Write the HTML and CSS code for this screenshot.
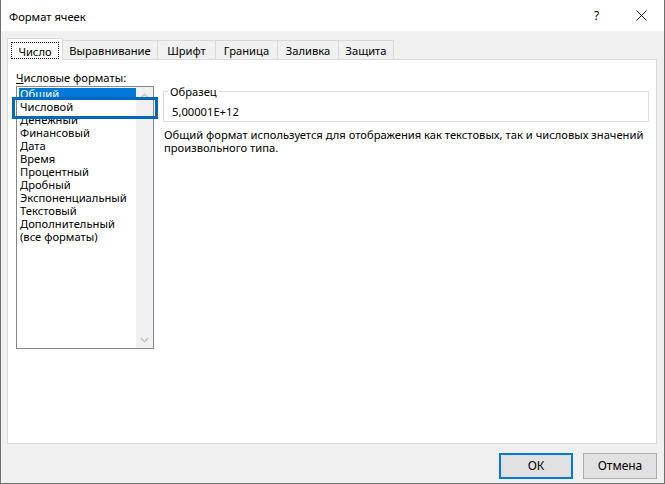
FILE: index.html
```html
<!DOCTYPE html>
<html lang="ru">
<head>
<meta charset="utf-8">
<title>Формат ячеек</title>
<link rel="stylesheet" href="styles.css">
</head>
<body>
<div class="window">
  <div class="titlebar">
    <span class="title">Формат ячеек</span>
    <div class="caption-buttons">
      <div class="cap-btn help">?</div>
      <div class="cap-btn close">
        <svg width="11" height="11" viewBox="0 0 11 11"><path d="M0.5 0.5 L10.5 10.5 M10.5 0.5 L0.5 10.5" stroke="#1a1a1a" stroke-width="1" fill="none"/></svg>
      </div>
    </div>
  </div>
  <div class="client">
    <div class="tabs">
      <div class="tab active"><span class="tab-focus">Число</span></div>
      <div class="tab">Выравнивание</div>
      <div class="tab">Шрифт</div>
      <div class="tab">Граница</div>
      <div class="tab">Заливка</div>
      <div class="tab">Защита</div>
    </div>
    <div class="panel">
      <div class="left">
        <div class="label"><span class="accel">Ч</span>исловые форматы:</div>
        <div class="listbox">
          <div class="viewport">
            <div class="items">
              <div class="item selected">Общий</div>
              <div class="item">Числовой</div>
              <div class="item">Денежный</div>
              <div class="item">Финансовый</div>
              <div class="item">Дата</div>
              <div class="item">Время</div>
              <div class="item">Процентный</div>
              <div class="item">Дробный</div>
              <div class="item">Экспоненциальный</div>
              <div class="item">Текстовый</div>
              <div class="item">Дополнительный</div>
              <div class="item">(все форматы)</div>
            </div>
          </div>
          <div class="scrollbar">
            <div class="sb-btn">
              <svg width="9" height="6" viewBox="0 0 9 6"><polyline points="0.8,5 4.5,1.3 8.2,5" fill="none" stroke="#c2c2c2" stroke-width="1.6"/></svg>
            </div>
            <div class="sb-btn">
              <svg width="9" height="6" viewBox="0 0 9 6"><polyline points="0.8,1 4.5,4.7 8.2,1" fill="none" stroke="#c2c2c2" stroke-width="1.6"/></svg>
            </div>
          </div>
          <div class="focus-ring"></div>
        </div>
      </div>
      <div class="right">
        <fieldset class="sample">
          <legend>Образец</legend>
          <div class="sample-value">5,00001E+12</div>
        </fieldset>
        <p class="desc">Общий формат используется для отображения как текстовых, так и числовых значений<br>произвольного типа.</p>
      </div>
    </div>
    <div class="footer">
      <button class="btn default">ОК</button>
      <button class="btn">Отмена</button>
    </div>
  </div>
</div>
</body>
</html>
```
FILE: styles.css
```css
html, body {
  margin: 0;
  padding: 0;
  background: #ffffff;
}

body {
  font-family: "Segoe UI", "Noto Sans", "Open Sans", sans-serif;
  font-size: 11.2px;
  line-height: 13px;
  color: #000;
}

.window {
  width: 665px;
  height: 484px;
  box-sizing: border-box;
  border: 1px solid #707070;
  border-top: none;
  background: #f0f0f0;
  display: flex;
  flex-direction: column;
}

.titlebar {
  flex: none;
  height: 31px;
  background: #ffffff;
  display: flex;
  align-items: center;
}

.title {
  flex: 1;
  padding-left: 8px;
  padding-top: 1px;
}

.caption-buttons {
  display: flex;
  align-self: stretch;
}

.cap-btn {
  width: 45px;
  display: flex;
  align-items: center;
  justify-content: center;
}

.cap-btn.help {
  font-size: 12px;
}

.client {
  flex: 1;
  display: flex;
  flex-direction: column;
  padding: 7px 7px 0 6px;
}

.tabs {
  display: flex;
  align-items: flex-end;
  height: 21px;
  position: relative;
  z-index: 1;
}

.tab {
  box-sizing: border-box;
  height: 19px;
  border: 1px solid #d9d9d9;
  border-bottom: none;
  background: #f0f0f0;
  display: flex;
  align-items: center;
  justify-content: center;
  margin-left: -1px;
  padding-top: 1px;
  white-space: nowrap;
}

.tab:nth-child(1) { width: 56px; }
.tab:nth-child(2) { width: 96px; }
.tab:nth-child(3) { width: 59px; }
.tab:nth-child(4) { width: 63px; }
.tab:nth-child(5) { width: 62px; }
.tab:nth-child(6) { width: 56px; }

.tab.active {
  height: 22px;
  margin-left: 0;
  margin-bottom: -1px;
  padding-top: 0;
  background: #ffffff;
  position: relative;
  z-index: 2;
  align-items: stretch;
}

.tab-focus {
  flex: 1;
  margin: 3px 3px 1px 3px;
  border: 1px dotted #000;
  display: flex;
  align-items: center;
  justify-content: center;
  padding-top: 1px;
}

.panel {
  flex: none;
  height: 385px;
  box-sizing: border-box;
  border: 1px solid #d9d9d9;
  background: #ffffff;
  display: flex;
  padding: 10px 7px 0 8px;
}

.left {
  width: 138px;
  flex: none;
  display: flex;
  flex-direction: column;
}

.label {
  height: 13px;
  margin-bottom: 3px;
  padding-top: 1px;
  box-sizing: border-box;
  white-space: nowrap;
}

.accel {
  text-decoration: underline;
}

.listbox {
  position: relative;
  height: 263px;
  box-sizing: border-box;
  border: 1px solid #828790;
  display: flex;
}

.viewport {
  flex: 1;
  overflow: hidden;
  margin-top: 1px;
  padding-left: 2px;
}

.items {
  margin-top: -2px;
}

.item {
  height: 13px;
  padding-left: 1px;
  padding-top: 1px;
  box-sizing: border-box;
  white-space: nowrap;
}

.item.selected {
  background: #0078d7;
  color: #ffffff;
}

.scrollbar {
  width: 17px;
  flex: none;
  background: #f0f0f0;
  display: flex;
  flex-direction: column;
  justify-content: space-between;
}

.sb-btn {
  height: 17px;
  display: flex;
  align-items: center;
  justify-content: center;
}

.focus-ring {
  position: absolute;
  left: -5px;
  top: 10px;
  width: 146px;
  height: 22px;
  box-sizing: border-box;
  border: 3px solid #0067c0;
  pointer-events: none;
}

.right {
  flex: 1;
  min-width: 0;
  margin-left: 9px;
  margin-top: 15px;
}

.sample {
  margin: 0;
  min-width: 0;
  border: 1px solid #dcdcdc;
  padding: 6px 8px 3px 8px;
}

.sample legend {
  padding: 0 2px;
  margin-left: -4px;
  line-height: 13px;
}

.sample-value {
  height: 13px;
  padding-top: 1px;
}

.desc {
  margin: 6px 0 0 1px;
  line-height: 13px;
  white-space: nowrap;
}

.footer {
  display: flex;
  justify-content: flex-end;
  gap: 10px;
  margin-top: 9px;
}

.btn {
  width: 74px;
  height: 26px;
  box-sizing: border-box;
  border: 1px solid #adadad;
  background: #e1e1e1;
  font: inherit;
  font-size: 12px;
  line-height: 13px;
  color: #000;
  padding: 0 0 2px 0;
}

.btn.default {
  border: 2px solid #0078d7;
}
```
